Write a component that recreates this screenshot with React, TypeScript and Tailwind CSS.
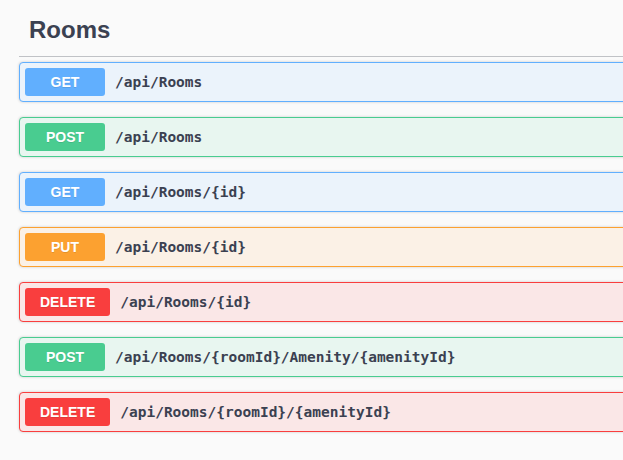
import React from "react";

type Op = { method: "GET" | "POST" | "PUT" | "DELETE"; path: string };

const ops: Op[] = [
  { method: "GET", path: "/api/Rooms" },
  { method: "POST", path: "/api/Rooms" },
  { method: "GET", path: "/api/Rooms/{id}" },
  { method: "PUT", path: "/api/Rooms/{id}" },
  { method: "DELETE", path: "/api/Rooms/{id}" },
  { method: "POST", path: "/api/Rooms/{roomId}/Amenity/{amenityId}" },
  { method: "DELETE", path: "/api/Rooms/{roomId}/{amenityId}" },
];

const styles: Record<Op["method"], { row: string; badge: string }> = {
  GET: { row: "bg-[#ebf3fb] border-[#61affe]", badge: "bg-[#61affe]" },
  POST: { row: "bg-[#e8f6f0] border-[#49cc90]", badge: "bg-[#49cc90]" },
  PUT: { row: "bg-[#fbf1e6] border-[#fca130]", badge: "bg-[#fca130]" },
  DELETE: { row: "bg-[#fae7e7] border-[#f93e3e]", badge: "bg-[#f93e3e]" },
};

export default function App() {
  return (
    <div className="w-[623px] h-[460px] overflow-hidden bg-[#fafafa]">
      <div className="w-[760px] pl-[19px]">
        <div
          className="px-[10px] pt-[16px] pb-[12px] text-[24px] leading-[28px] font-bold text-[#3b4151] border-b border-[rgba(59,65,81,0.3)]"
          style={{ fontFamily: '"Liberation Sans", Arial, sans-serif' }}
        >
          Rooms
        </div>
        <div className="mt-[5px]">
          {ops.map((op, i) => (
            <div
              key={i}
              className={`flex items-center p-[5px] mb-[15px] border rounded-[4px] shadow-[0_0_3px_rgba(0,0,0,0.19)] ${styles[op.method].row}`}
            >
              <span
                className={`min-w-[80px] px-[15px] py-[6px] rounded-[3px] text-center text-white text-[14px] leading-[16px] font-bold [text-shadow:0_1px_0_rgba(0,0,0,0.1)] ${styles[op.method].badge}`}
                style={{ fontFamily: '"Liberation Sans", Arial, sans-serif' }}
              >
                {op.method}
              </span>
              <span
                className="px-[10px] text-[14.5px] leading-[20px] font-bold text-[#3b4151]"
                style={{ fontFamily: '"DejaVu Sans Mono", monospace' }}
              >
                {op.path}
              </span>
            </div>
          ))}
        </div>
      </div>
    </div>
  );
}
